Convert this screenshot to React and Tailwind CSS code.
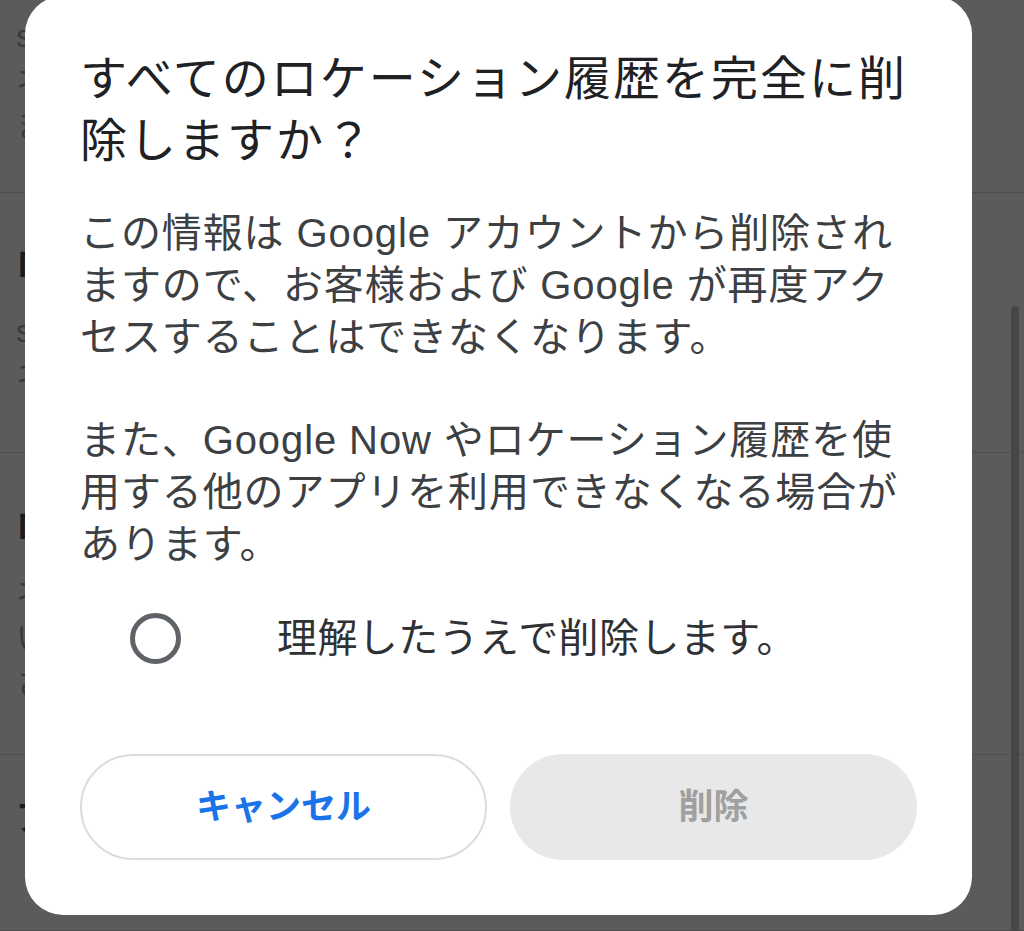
import React, { useState } from "react";

const FONT = {
  fontFamily: '"Liberation Sans", "Noto Sans CJK JP", sans-serif',
};

// Faded settings list behind the modal
const rows = [
  { lines: ["sを使用する端末の設定を管理します", "ネットワークに接続された端末", "ます。"] },
  { title: "ロケーション履歴", lines: ["sを使用する端末の設定を管理します", "ネットワークに接続された端末"] },
  { title: "ロケーション履歴を削除", lines: ["ネットワークに接続された端末", "いつでも削除できます", "さらに詳しく"] },
  { title: "アカウント設定", lines: [] },
];

const BackgroundList = () => (
  <div className="min-h-[931px] bg-[#5b5b5b]" style={FONT}>
    {rows.map((row, i) => (
      <div
        key={i}
        className={`border-b border-[#4e4e4e] pl-[16px] ${
          i === 0
            ? "h-[193px] pt-[14px]"
            : i === 1
            ? "h-[260px] pt-[48px]"
            : i === 2
            ? "h-[302px] pt-[50px]"
            : "h-[176px] pt-[40px]"
        }`}
      >
        <div className="w-[14px] overflow-hidden">
          {row.title && (
            <div className="text-[34px] font-bold leading-[46px] text-[#1c1c1c] whitespace-nowrap">
              {row.title}
            </div>
          )}
          <div className={row.title ? "mt-[22px]" : ""}>
            {row.lines.map((l, j) => (
              <div
                key={j}
                className="text-[32px] leading-[45px] text-[#3a3a3a] whitespace-nowrap"
              >
                {l}
              </div>
            ))}
          </div>
        </div>
      </div>
    ))}
  </div>
);

const App = () => {
  const [agreed, setAgreed] = useState(false);

  return (
    <div className="relative h-[931px] overflow-hidden bg-[#4a4a4a]">
      <BackgroundList />

      {/* scrollbar */}
      <div className="absolute left-[1011px] top-[306px] h-[640px] w-[8px] rounded-full bg-[#464646]" />

      {/* Modal */}
      <div
        className="absolute left-[25px] top-[-4px] w-[947px] rounded-[38px] bg-white px-[55px] pt-[52px] pb-[55px]"
        style={FONT}
      >
        <h2 className="text-[47px] leading-[62px] tracking-[2px] text-[#202124] font-normal">
          <span className="block whitespace-nowrap">すべてのロケーション履歴を完全に削</span>
          <span className="block whitespace-nowrap">除しますか？</span>
        </h2>

        <div className="mt-[35px] text-[40px] leading-[52px] tracking-[0.9px] text-[#3c4043]">
          <p>
            <span className="block whitespace-nowrap">この情報は Google アカウントから削除され</span>
            <span className="block whitespace-nowrap">ますので、お客様および Google が再度アク</span>
            <span className="block whitespace-nowrap">セスすることはできなくなります。</span>
          </p>
          <p className="mt-[51px]">
            <span className="block whitespace-nowrap">また、Google Now やロケーション履歴を使</span>
            <span className="block whitespace-nowrap">用する他のアプリを利用できなくなる場合が</span>
            <span className="block whitespace-nowrap">あります。</span>
          </p>
        </div>

        <label
          className="mt-[42px] flex h-[52px] items-center cursor-pointer"
          onClick={() => setAgreed(!agreed)}
        >
          <span className="ml-[50px] flex h-[51px] w-[51px] items-center justify-center rounded-full border-[5px] border-[#5f6368]">
            {agreed && <span className="h-[25px] w-[25px] rounded-full bg-[#1a73e8]" />}
          </span>
          <span className="ml-[96px] text-[40px] leading-[52px] tracking-[0.4px] text-[#303134] whitespace-nowrap">
            理解したうえで削除します。
          </span>
        </label>

        <div className="mt-[90px] grid grid-cols-2 gap-[23px]">
          <button className="h-[106px] rounded-full border-2 border-[#dadce0] bg-white text-[35px] font-bold text-[#1a73e8]">
            キャンセル
          </button>
          <button
            disabled={!agreed}
            className={`h-[106px] rounded-full text-[35px] font-bold ${
              agreed ? "bg-[#1a73e8] text-white" : "bg-[#e8e8e8] text-[#a0a0a0]"
            }`}
          >
            削除
          </button>
        </div>
      </div>
    </div>
  );
};

export default App;
